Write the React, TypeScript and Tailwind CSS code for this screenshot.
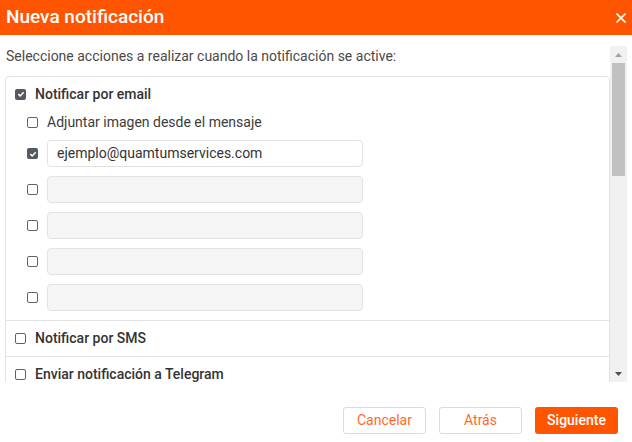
import React from "react";

function Box({ checked = false }: { checked?: boolean }) {
  return checked ? (
    <span className="flex h-[11px] w-[11px] shrink-0 items-center justify-center rounded-[2px] bg-[#555a60]">
      <svg width="8" height="8" viewBox="0 0 8 8">
        <path d="M1.3 4.1 L3.2 5.9 L6.7 2.2" fill="none" stroke="#fff" strokeWidth="1.5" />
      </svg>
    </span>
  ) : (
    <span className="h-[11px] w-[11px] shrink-0 rounded-[2px] border-[1.5px] border-[#5f6368] bg-white" />
  );
}

export default function App() {
  const emails = ["ejemplo@quamtumservices.com", "", "", "", ""];

  return (
    <div
      className="flex h-[442px] w-[632px] flex-col overflow-hidden bg-white text-[14px] text-[#3c3c3c]"
      style={{ fontFamily: "Roboto, 'Liberation Sans', sans-serif" }}
    >
      {/* header */}
      <div className="flex h-[35px] shrink-0 items-center justify-between bg-[#ff5500] pl-[6px] pr-[6px]">
        <span className="text-[19px] font-medium text-white">Nueva notificación</span>
        <svg width="10" height="10" viewBox="0 0 10 10">
          <path d="M0.5 0.5 L9.5 9.5 M9.5 0.5 L0.5 9.5" stroke="#fff" strokeWidth="1.6" />
        </svg>
      </div>

      {/* body */}
      <div className="mt-[11px] flex h-[336px] w-[627px] shrink-0">
        <div className="flex-1 overflow-hidden">
          <p className="h-5 pl-[6px] leading-5 text-[#4a4a4a]">
            Seleccione acciones a realizar cuando la notificación se active:
          </p>
          <div className="ml-[5px] mt-[10px] rounded-t-[4px] border border-[#e3e3e3]">
            {/* email */}
            <div className="flex flex-col pb-[9px] pt-[7px]">
              <div className="flex h-5 items-center gap-[9px] pl-[9px]">
                <Box checked />
                <span className="font-medium text-[#333]">Notificar por email</span>
              </div>
              <div className="mt-2 flex h-5 items-center gap-[9px] pl-[21px]">
                <Box />
                <span>Adjuntar imagen desde el mensaje</span>
              </div>
              <div className="mt-[8px] flex flex-col gap-[9px]">
                {emails.map((e, i) => (
                  <div key={i} className="flex items-center gap-[9px] pl-[21px]">
                    <Box checked={e !== ""} />
                    <div
                      className={`flex h-[27px] w-[316px] items-center rounded-[4px] border border-[#e2e2e2] px-[9px] text-[#333] ${
                        e ? "bg-white" : "bg-[#f5f5f5]"
                      }`}
                    >
                      {e}
                    </div>
                  </div>
                ))}
              </div>
            </div>
            <div className="flex h-[36px] items-center gap-[9px] border-t border-[#e3e3e3] pl-[9px]">
              <Box />
              <span className="font-medium text-[#333]">Notificar por SMS</span>
            </div>
            <div className="flex h-[36px] items-center gap-[9px] border-t border-[#e3e3e3] pl-[9px]">
              <Box />
              <span className="font-medium text-[#333]">Enviar notificación a Telegram</span>
            </div>
          </div>
        </div>

        {/* scrollbar */}
        <div className="flex w-[17px] shrink-0 flex-col items-center bg-[#f1f1f1]">
          <div className="flex h-[17px] items-center justify-center">
            <svg width="7" height="4" viewBox="0 0 7 4">
              <path d="M0 4 L3.5 0 L7 4 Z" fill="#a3a3a3" />
            </svg>
          </div>
          <div className="h-[113px] w-[13px] bg-[#c1c1c1]" />
          <div className="flex-1" />
          <div className="flex h-[17px] items-center justify-center">
            <svg width="7" height="4" viewBox="0 0 7 4">
              <path d="M0 0 L7 0 L3.5 4 Z" fill="#505050" />
            </svg>
          </div>
        </div>
      </div>

      {/* footer */}
      <div className="mt-[25px] flex justify-end gap-[13px] pr-[14px]">
        <button className="h-[27px] w-[83px] rounded-[3px] border border-[#dcdcdc] bg-white text-[#ff6a2b]">
          Cancelar
        </button>
        <button className="h-[27px] w-[83px] rounded-[3px] border border-[#dcdcdc] bg-white text-[#ff6a2b]">
          Atrás
        </button>
        <button className="h-[27px] w-[83px] rounded-[3px] bg-[#ff5500] font-medium text-white">
          Siguiente
        </button>
      </div>
    </div>
  );
}
